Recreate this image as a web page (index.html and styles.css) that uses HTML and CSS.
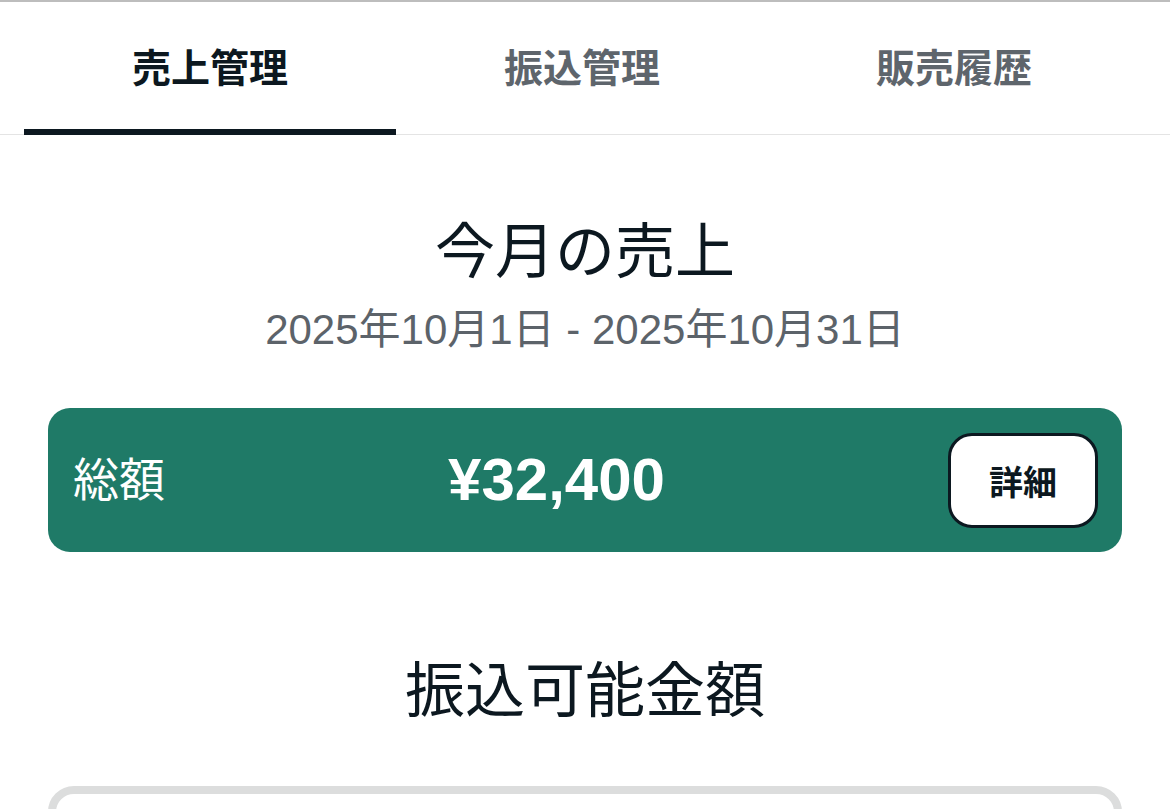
FILE: index.html
```
<!DOCTYPE html>
<html lang="ja">
<head>
<meta charset="utf-8">
<title>売上管理</title>
<link rel="stylesheet" href="styles.css">
</head>
<body>
<nav class="tabs">
  <div class="tab active">売上管理</div>
  <div class="tab">振込管理</div>
  <div class="tab">販売履歴</div>
</nav>
<main class="content">
  <h1 class="title">今月の売上</h1>
  <p class="period">2025年10月1日 - 2025年10月31日</p>
  <section class="total-card">
    <span class="total-label">総額</span>
    <span class="total-amount">¥32,400</span>
    <button class="detail-btn">詳細</button>
  </section>
  <h2 class="title title-second">振込可能金額</h2>
  <section class="transfer-card"></section>
</main>
</body>
</html>
```
FILE: styles.css
```
html, body {
  margin: 0;
  padding: 0;
  background: #ffffff;
}
body {
  font-family: "Liberation Sans", "Noto Sans CJK JP", sans-serif;
  color: #0c1820;
  overflow: hidden;
}
.tabs {
  display: flex;
  padding: 0 30px 0 24px;
  border-top: 2px solid #bdbdbd;
  border-bottom: 1px solid #e4e4e4;
  height: 132px;
}
.tab {
  flex: 1;
  display: flex;
  align-items: center;
  justify-content: center;
  font-size: 39px;
  font-weight: 700;
  color: #5e656c;
  padding-bottom: 8px;
  box-sizing: border-box;
  margin-bottom: -1px;
}
.tab.active {
  color: #0c1820;
  border-bottom: 6px solid #0c1820;
  padding-bottom: 2px;
}
.content {
  display: flex;
  flex-direction: column;
  padding: 0 48px;
}
.title {
  margin: 78px 0 0;
  text-align: center;
  font-size: 60px;
  font-weight: 400;
  line-height: 80px;
}
.period {
  margin: 9px 0 0;
  text-align: center;
  font-size: 42px;
  line-height: 56px;
  color: #5c636a;
}
.total-card {
  margin-top: 50px;
  height: 144px;
  box-sizing: border-box;
  background: #1f7a67;
  border-radius: 22px;
  display: flex;
  align-items: center;
  padding: 0 24px 0 25px;
  color: #ffffff;
}
.total-label {
  font-size: 46px;
  line-height: 1;
}
.total-amount {
  flex: 1;
  text-align: center;
  font-size: 60px;
  font-weight: 700;
  line-height: 1;
}
.detail-btn {
  width: 150px;
  height: 95px;
  background: #ffffff;
  border: 3px solid #0c1820;
  border-radius: 24px;
  font-family: "Liberation Sans", "Noto Sans CJK JP", sans-serif;
  font-size: 34px;
  font-weight: 700;
  color: #0c1820;
  padding: 0;
}
.title-second {
  margin-top: 100px;
}
.transfer-card {
  margin-top: 54px;
  height: 120px;
  border: 8px solid #dcdddd;
  border-radius: 26px;
  background: #ffffff;
}
```
